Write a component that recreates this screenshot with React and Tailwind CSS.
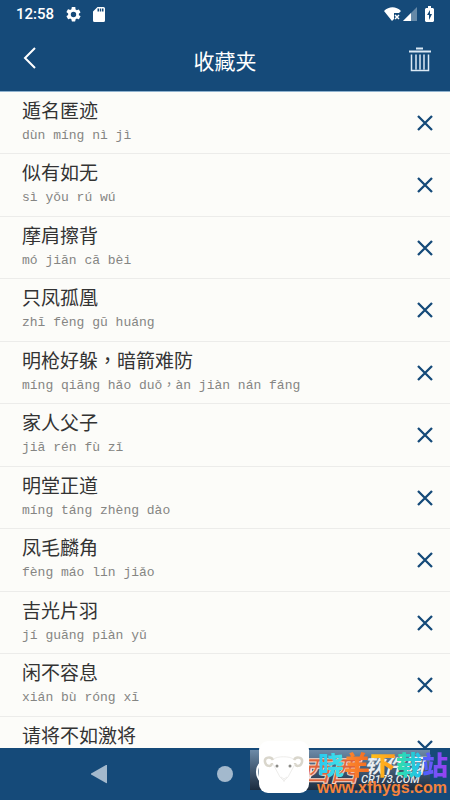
import clsx from 'clsx';

const IDIOMS = [
    { word: '遁名匿迹', pinyin: 'dùn míng nì jì' },
    { word: '似有如无', pinyin: 'sì yǒu rú wú' },
    { word: '摩肩擦背', pinyin: 'mó jiān cā bèi' },
    { word: '只凤孤凰', pinyin: 'zhī fèng gū huáng' },
    { word: '明枪好躲，暗箭难防', pinyin: 'míng qiāng hǎo duǒ，àn jiàn nán fáng' },
    { word: '家人父子', pinyin: 'jiā rén fù zǐ' },
    { word: '明堂正道', pinyin: 'míng táng zhèng dào' },
    { word: '凤毛麟角', pinyin: 'fèng máo lín jiǎo' },
    { word: '吉光片羽', pinyin: 'jí guāng piàn yǔ' },
    { word: '闲不容息', pinyin: 'xián bù róng xī' },
    { word: '请将不如激将', pinyin: '' },
];

export default function App() {
    return (
        <div className="relative flex h-screen flex-col overflow-hidden bg-[#fcfcf9] font-['Roboto','Noto_Sans_CJK_SC',sans-serif]">
            <StatusBar />

            {/* Title bar */}
            <header className="grid h-16 shrink-0 grid-cols-[1fr_auto_1fr] items-center border-b border-[#8fb2cf] bg-[#154a79] pr-[18px] pl-[18px] text-white">
                <button aria-label="返回" className="-mt-1 justify-self-start">
                    <svg width="22" height="24" viewBox="0 0 22 24" fill="none" stroke="currentColor" strokeWidth="2">
                        <path d="M17 2 7 12l10 10" />
                    </svg>
                </button>
                <h1 className="pt-1 text-[21px] leading-6">收藏夹</h1>
                <button aria-label="清空" className="justify-self-end">
                    <TrashIcon />
                </button>
            </header>

            {/* Favourites */}
            <ul className="min-h-0 flex-1 overflow-hidden">
                {IDIOMS.map((item) => (
                    <IdiomRow key={item.word} {...item} />
                ))}
            </ul>

            {/* Android navigation */}
            <nav className="grid h-[52px] shrink-0 grid-cols-[1fr_52px_1fr] items-center bg-[#154a79] text-[#a3b9cd]">
                <button aria-label="后退" className="justify-self-center">
                    <svg width="18" height="20" viewBox="0 0 18 20" fill="currentColor">
                        <path d="M16 1v18a1 1 0 0 1-1 0L1 11a1 1 0 0 1 0-2l14-8q1 0 1 0Z" />
                    </svg>
                </button>
                <button aria-label="主页" className="justify-self-center">
                    <svg width="16" height="16" viewBox="0 0 16 16" fill="currentColor">
                        <circle cx="8" cy="8" r="8" />
                    </svg>
                </button>
            </nav>

            <Watermark />
        </div>
    );
}

function IdiomRow({ word, pinyin }) {
    return (
        <li className="flex items-center justify-between border-b border-[#ececea] pr-4 pl-[22px] odd:h-[62px] even:h-[63px]">
            <div>
                <p className="h-[26px] font-['Noto_Sans_CJK_SC',sans-serif] text-[19px] leading-[26px] text-[#333]">
                    <Phrase text={word} />
                </p>
                <p className="h-[26px] font-['Liberation_Mono','Noto_Sans_CJK_SC',monospace] text-[13px] leading-[26px] text-[#858583]">
                    <Phrase text={pinyin} />
                </p>
            </div>
            <button aria-label={`删除 ${word}`} className="text-[#154a79]">
                <svg width="18" height="18" viewBox="0 0 18 18" fill="none" stroke="currentColor" strokeWidth="2.3">
                    <path d="m2 2 14 14M16 2 2 16" />
                </svg>
            </button>
        </li>
    );
}

// The comma sits in the middle of its square, which only the TC font does
function Phrase({ text }) {
    const [head, tail] = text.split('，');
    if (!tail) return head;
    return (
        <>
            {head}
            <span lang="zh-TW" className="font-['Noto_Sans_CJK_TC',sans-serif] leading-none">，</span>
            {tail}
        </>
    );
}

function StatusBar() {
    return (
        <div className="flex h-7 shrink-0 items-center justify-between bg-[#154a79] px-4 text-white">
            <div className="flex items-center gap-3">
                <span className="text-[15px] leading-7 font-medium">12:58</span>
                <svg width="15" height="15" viewBox="2 2 20 20" fill="currentColor">
                    <path d="M19.14 12.94c.04-.3.06-.61.06-.94s-.02-.64-.07-.94l2.03-1.58a.49.49 0 0 0 .12-.61l-1.92-3.32a.49.49 0 0 0-.59-.22l-2.39.96a7 7 0 0 0-1.62-.94l-.36-2.54A.48.48 0 0 0 13.92 2h-3.84a.48.48 0 0 0-.47.41l-.36 2.54a7 7 0 0 0-1.62.94l-2.39-.96a.48.48 0 0 0-.59.22L2.74 8.47a.48.48 0 0 0 .12.61l2.03 1.58a7 7 0 0 0 0 1.88l-2.03 1.58a.49.49 0 0 0-.12.61l1.92 3.32c.12.22.37.29.59.22l2.39-.96c.5.38 1.03.7 1.62.94l.36 2.54c.05.24.24.41.48.41h3.84c.24 0 .44-.17.47-.41l.36-2.54a7 7 0 0 0 1.62-.94l2.39.96c.22.08.47 0 .59-.22l1.92-3.32a.49.49 0 0 0-.12-.61ZM12 15.6a3.6 3.6 0 1 1 0-7.2 3.6 3.6 0 0 1 0 7.2Z" />
                </svg>
                <svg width="12" height="15" viewBox="4 2 16 20" fill="currentColor">
                    <path d="M18 2h-8L4 8v12a2 2 0 0 0 2 2h12a2 2 0 0 0 2-2V4a2 2 0 0 0-2-2Zm-6 6h-2V4h2v4Zm3 0h-2V4h2v4Zm3 0h-2V4h2v4Z" />
                </svg>
            </div>
            <div className="flex items-center">
                <svg width="18" height="15" viewBox="0 0 18 15" fill="currentColor">
                    <path d="M0 4C5-1 12-1 17 4l-2 2h-5v6l-2 2Z" />
                    <path d="m11 8 4 4m0-4-4 4" stroke="currentColor" strokeWidth="1.5" />
                </svg>
                <svg width="14" height="14" viewBox="0 0 14 14" fill="currentColor" className="ml-px">
                    <path d="M14 0v14H0Z" opacity=".35" />
                    <path d="M8 6v8H0Z" />
                </svg>
                <svg width="9" height="16" viewBox="0 0 9 16" className="ml-2">
                    <path d="M3 0h3v2h2l1 1v12l-1 1H1l-1-1V3l1-1h2Z" fill="currentColor" />
                    <path d="M5 4v4h2l-3 6V9H2Z" fill="#154a79" />
                </svg>
            </div>
        </div>
    );
}

function TrashIcon() {
    return (
        <svg width="24" height="26" viewBox="0 0 24 26" fill="none" stroke="#dbe9f5" strokeWidth="1.5">
            <path d="M8 1.5h7" strokeWidth="2" />
            <path d="M1 4.5h22" strokeWidth="2" />
            <path d="M3.5 7.5v16h17v-16M8 7.5v15M12 7.5v15M16 7.5v15" />
        </svg>
    );
}

const BRAND = [
    { char: '晓', color: 'from-[#28c8f0] to-[#43e3e6]' },
    { char: '羊', color: 'from-[#ff8b2f] to-[#f26a20]' },
    { char: '下', color: 'from-[#ffc21a] to-[#ff9a1f]' },
    { char: '载', color: 'from-[#35e2a0] to-[#25bdf0]' },
    { char: '站', color: 'from-[#3b62ff] to-[#9b3cf0]' },
];

function Watermark() {
    return (
        <div className="pointer-events-none absolute right-0 bottom-0 h-[60px] w-[200px]">
            <div className="absolute top-[10px] right-5 h-10 w-[180px] overflow-hidden bg-linear-to-b from-[#6d8ba8] to-[#1c2c40]">
                <div className="absolute top-2 left-1.5 h-7 w-14 rounded-full border-2 border-white bg-[#8295a8]" />
                <span className="absolute top-2 left-[52px] text-[28px] leading-7 font-bold text-[#e0633a] italic [-webkit-text-stroke:1px_#f3d6c8]">西西</span>
                <span className="absolute top-1.5 left-[114px] text-xl leading-5 font-bold text-[#e9edf1] italic">软件园</span>
                <span className="absolute bottom-1 left-[111px] text-[11px] leading-3 font-medium text-[#e9edf1] italic">CR173.COM</span>
            </div>
            <GoatLogo />
            <div className="absolute top-2.5 left-[68px] flex text-[26px] leading-8 font-black">
                {BRAND.map(({ char, color }) => (
                    <span key={char} className={clsx('bg-linear-to-r bg-clip-text text-transparent', color)}>{char}</span>
                ))}
            </div>
            <span className="absolute right-[3px] bottom-0 font-['Liberation_Sans',sans-serif] text-base leading-6 font-bold text-[#f5833b]">www.xfhygs.com</span>
        </div>
    );
}

function GoatLogo() {
    return (
        <svg width="50" height="52" viewBox="0 0 50 52" fill="none" className="absolute top-px left-[9px]">
            <rect width="50" height="52" rx="9" fill="#fff" />
            <path d="M14 19c-2-4-9-3-8 2 1 5 7 5 7 1M35 19c2-4 9-3 8 2-1 5-7 5-7 1" stroke="#d9d6cc" strokeWidth="2.5" />
            <path d="M15 18c3-3 16-3 19 0M14 23l7 13 4 4 4-4 7-13M22 36l3 2 3-2M25 38v3" stroke="#eeedeb" />
            <circle cx="18" cy="25" r="1.5" fill="#8a8a86" />
            <circle cx="31" cy="25" r="1.5" fill="#8a8a86" />
        </svg>
    );
}
